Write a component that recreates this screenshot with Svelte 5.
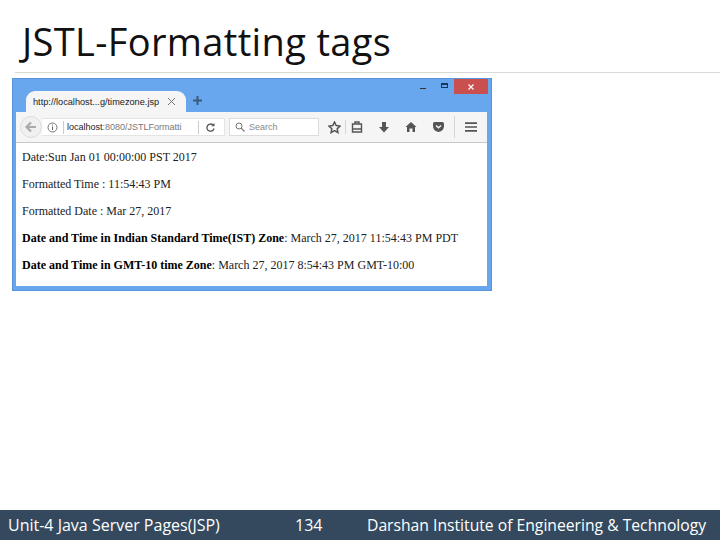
<script>
  const lines = [
    { plain: 'Date:Sun Jan 01 00:00:00 PST 2017' },
    { plain: 'Formatted Time : 11:54:43 PM' },
    { plain: 'Formatted Date : Mar 27, 2017' },
    { bold: 'Date and Time in Indian Standard Time(IST) Zone', plain: ': March 27, 2017 11:54:43 PM PDT' },
    { bold: 'Date and Time in GMT-10 time Zone', plain: ': March 27, 2017 8:54:43 PM GMT-10:00' }
  ];
</script>

<div class="page">
  <header class="head"><h1>JSTL-Formatting tags</h1></header>

  <section class="browser">
    <div class="tabbar">
      <div class="tab">
        <span class="tabtitle">http://localhost...g/timezone.jsp</span>
        <svg class="tabx" width="9" height="9" viewBox="0 0 9 9"><path d="M1 1l7 7M8 1l-7 7" stroke="#777" fill="none"/></svg>
      </div>
      <svg class="plus" width="11" height="11" viewBox="0 0 11 11"><path d="M5.5 1v9M1 5.5h9" stroke="#3f5a78" stroke-width="2" fill="none"/></svg>
      <div class="winbtns">
        <span class="min"></span>
        <span class="max"></span>
        <span class="close"><svg width="8" height="8" viewBox="0 0 8 8"><path d="M1.5 1.5l5 5M6.5 1.5l-5 5" stroke="#fff" stroke-width="1.2" fill="none"/></svg></span>
      </div>
    </div>

    <div class="toolbar">
      <span class="back"><svg width="12" height="12" viewBox="0 0 12 12"><path d="M6 1.5L1.5 6 6 10.5M2 6h9" stroke="#aaa" stroke-width="2.2" fill="none"/></svg></span>
      <div class="urlbox">
        <svg class="info" width="11" height="11" viewBox="0 0 11 11"><circle cx="5.5" cy="5.5" r="4.5" fill="none" stroke="#777"/><path d="M5.5 4.5v3.5M5.5 2.5v1" stroke="#666"/></svg>
        <span class="sep"></span>
        <span class="url"><b>localhost</b>:8080/JSTLFormatti</span>
        <span class="sep right"></span>
        <svg class="reload" width="11" height="11" viewBox="0 0 11 11"><path d="M9 6.5A3.6 3.6 0 1 1 8 3" fill="none" stroke="#555" stroke-width="1.3"/><path d="M9.500 1v3.200H6.300z" fill="#555"/></svg>
      </div>
      <div class="search">
        <svg width="10" height="10" viewBox="0 0 10 10"><circle cx="4" cy="4" r="3" fill="none" stroke="#777"/><path d="M6.2 6.2L9.500 9.500" stroke="#777" stroke-width="1.2"/></svg>
        <span>Search</span>
      </div>
      <div class="icons">
        <svg class="i1" width="13" height="13" viewBox="0 0 13 13"><path d="M6.500 1l1.700 3.600 3.800.5-2.800 2.600.7 3.900-3.400-1.900-3.400 1.900.7-3.900L1 5.100l3.800-.5z" fill="none" stroke="#555" stroke-width="1.500"/></svg>
        <span class="vsep"></span>
        <svg class="i2" width="12" height="12" viewBox="0 0 12 12"><path d="M1.500 3h9v8h-9zM4 3V1h4v2M1.500 8h9" fill="none" stroke="#555" stroke-width="1.400"/></svg>
        <svg class="i3" width="12" height="12" viewBox="0 0 12 12"><path d="M4 1h4v5h3l-5 5.500L1 6h3z" fill="#555"/></svg>
        <svg class="i4" width="12" height="12" viewBox="0 0 12 12"><path d="M6 1l5.500 5H10v5H7.500V7.500h-3V11H2V6H.5z" fill="#555"/></svg>
        <svg class="i5" width="13" height="12" viewBox="0 0 13 12"><path d="M1 2.500Q1 1 2.500 1h8Q12 1 12 2.500V5q0 5-5.500 6Q1 10 1 5z" fill="#555"/><path d="M4 4.500l2.500 2.300L9 4.500" stroke="#f5f5f5" stroke-width="1.500" fill="none"/></svg>
        <span class="vsep wide"></span>
        <svg class="i6" width="12" height="10" viewBox="0 0 12 10"><path d="M0 1.200h12M0 5h12M0 8.800h12" stroke="#555" stroke-width="1.700"/></svg>
      </div>
    </div>

    <div class="content">
      {#each lines as l}
        <p>{#if l.bold}<b>{l.bold}</b>{/if}{l.plain}</p>
      {/each}
    </div>
  </section>

  <footer class="foot">
    <span class="unit">Unit-4 Java Server Pages(JSP)</span>
    <span class="num">134</span>
    <span class="inst">Darshan Institute of Engineering &amp; Technology</span>
  </footer>
</div>

<style>
  :global(body) { margin: 0; background: #fff; }
  .page { width: 720px; height: 540px; display: flex; flex-direction: column; overflow: hidden; font-family: "Open Sans", "Noto Sans", sans-serif; }
  .head { height: 72px; margin-left: 15px; border-bottom: 1px solid #d9d9d9; padding-left: 7px; flex: none; }
  h1 { margin: 0; padding-top: 18px; font-size: 38px; line-height: 46px; font-weight: 400; color: #111; letter-spacing: 0.35px; white-space: nowrap; }
  .browser { width: 480px; height: 213px; margin: 5px 0 0 12px; box-sizing: border-box; background: #68a6ee; border: 1px solid #5a94d8; padding: 0 4px 4px 3px; display: flex; flex-direction: column; flex: none; }
  .tabbar { height: 33px; display: flex; align-items: flex-end; flex: none; }
  .tab { width: 160px; height: 21px; margin-left: 10px; background: #f5f5f5; border-radius: 9px 9px 0 0; display: flex; align-items: center; justify-content: space-between; padding: 0 10px 0 7px; box-sizing: border-box; }
  .tabtitle { font: 9.2px "Liberation Sans", sans-serif; color: #222; white-space: nowrap; }
  .plus { margin: 0 0 6px 6px; }
  .winbtns { margin-left: auto; align-self: flex-start; display: flex; align-items: flex-start; margin-right: -1px; }
  .min { width: 6px; height: 1px; background: #333; margin: 9px 15px 0 0; }
  .max { width: 7px; height: 5px; margin: 4px 6px 0 0; border: 1px solid #17365d; border-top-width: 2px; box-sizing: border-box; }
  .close { width: 34px; height: 15px; background: #c9504f; display: flex; align-items: center; justify-content: center; }
  .toolbar { height: 30px; background: #f5f5f5; border-bottom: 1px solid #c8c8c8; display: flex; align-items: center; flex: none; padding-left: 4px; }
  .back { width: 22px; height: 22px; border-radius: 50%; border: 1px solid #ddd; background: #f0f0f0; display: flex; align-items: center; justify-content: center; flex: none; box-sizing: border-box; }
  .urlbox { width: 183px; height: 18px; background: #fff; display: flex; align-items: center; flex: none; box-sizing: border-box; padding: 0 8px 0 5px; border: 1px solid #e4e4e4; border-left: none; }
  .sep { width: 1px; height: 13px; background: #ccc; margin: 0 3px 0 5px; flex: none; }
  .sep.right { margin: 0 6px 0 auto; }
  .url { font: 9px "Liberation Sans", sans-serif; color: #777; white-space: nowrap; }
  .url b { font-weight: 400; color: #222; }
  .search { width: 90px; height: 18px; margin-left: 4px; background: #fff; border: 1px solid #ddd; box-sizing: border-box; display: flex; align-items: center; gap: 4px; padding-left: 5px; font: 9px "Liberation Sans", sans-serif; color: #888; flex: none; }
  .icons { display: flex; align-items: center; margin-left: 9px; }
  .vsep { width: 1px; height: 14px; background: #d5d5d5; margin: 0 5px 0 4px; }
  .i3 { margin-left: 15px; }
  .i4 { margin-left: 15px; }
  .i5 { margin-left: 15px; }
  .vsep.wide { height: 22px; margin: 0 0 0 9px; }
  .i6 { margin-left: 10px; }
  .content { flex: 1; background: #fff; padding: 7px 6px 0; font: 12px/14px "Liberation Serif", serif; color: #222; }
  .content p { margin: 0 0 13px; white-space: nowrap; }
  .content b { color: #000; }
  .foot { margin-top: auto; height: 30px; background: #34495e; color: #fff; display: flex; align-items: center; font-size: 16px; flex: none; white-space: nowrap; }
  .unit { width: 295px; padding-left: 8px; box-sizing: border-box; }
  .num { width: 72px; }
  .inst { font-size: 15.7px; }
</style>
